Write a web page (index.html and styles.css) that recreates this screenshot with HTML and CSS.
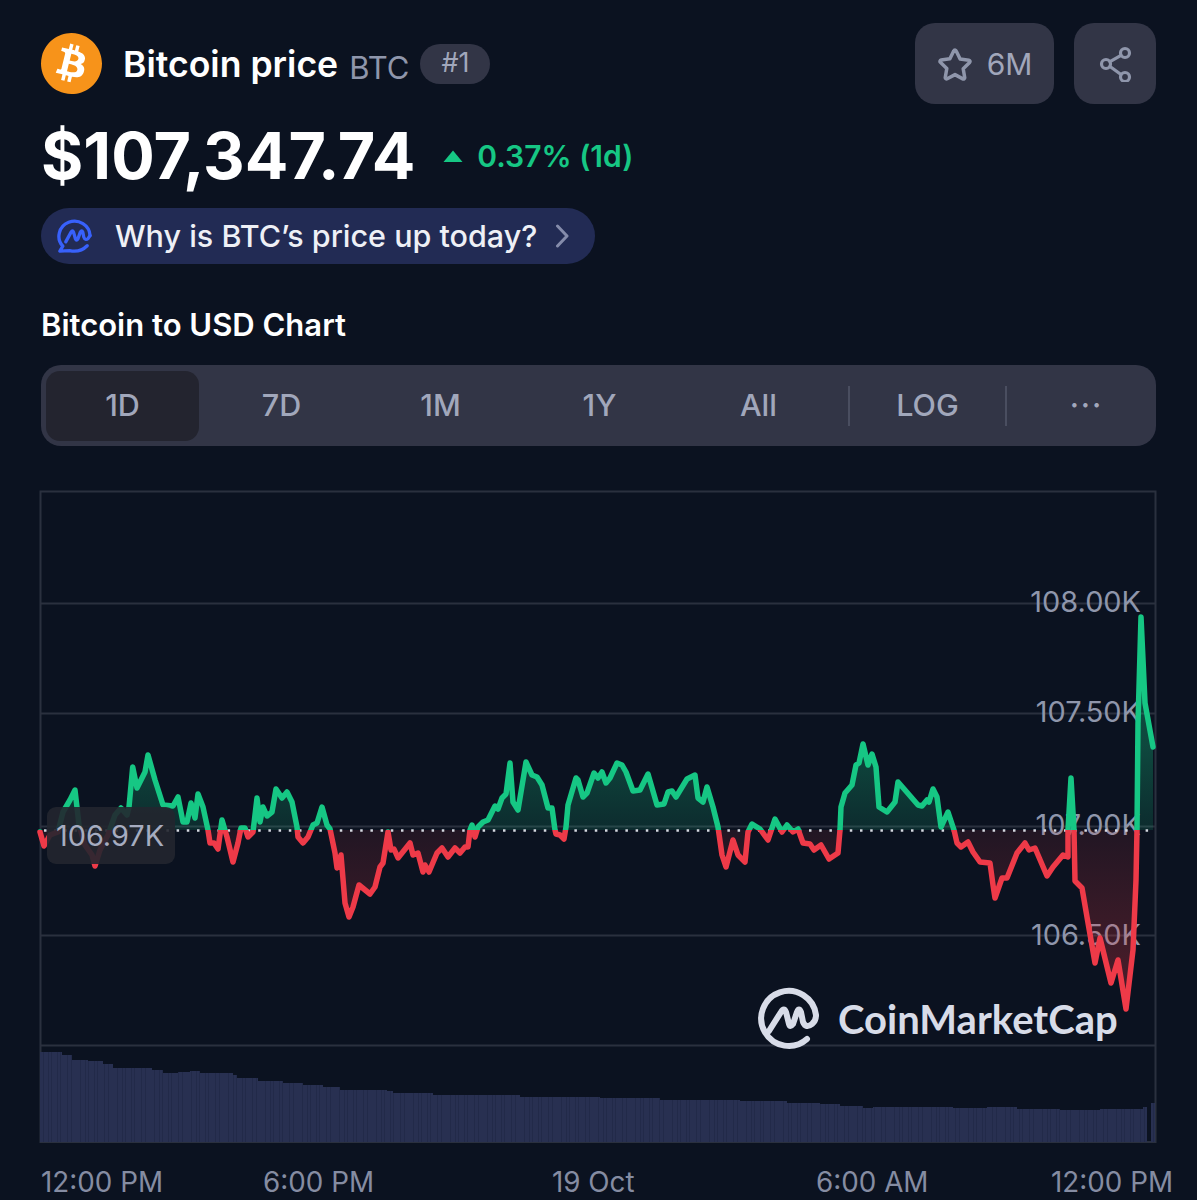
FILE: index.html
```html
<!DOCTYPE html>
<html lang="en">
<head>
<meta charset="utf-8">
<title>Bitcoin price</title>
<link rel="stylesheet" href="styles.css">
</head>
<body>
<main class="page">
  <header class="head">
    <svg class="coin" viewBox="0 0 24 24" aria-hidden="true">
      <circle cx="12" cy="12" r="9" fill="#fff"/>
      <path fill="#f7931a" d="M23.638 14.904c-1.602 6.43-8.113 10.34-14.542 8.736C2.67 22.05-1.244 15.525.362 9.105 1.962 2.67 8.475-1.243 14.9.358c6.43 1.605 10.342 8.115 8.738 14.548v-.002zm-6.35-4.613c.24-1.59-.974-2.45-2.64-3.03l.54-2.153-1.315-.33-.525 2.107c-.345-.087-.705-.167-1.064-.25l.526-2.127-1.32-.33-.54 2.165c-.285-.067-.565-.132-.84-.2l-1.815-.45-.35 1.407s.975.225.955.236c.535.136.63.486.615.766l-1.477 5.92c-.075.166-.24.406-.614.314.015.02-.96-.24-.96-.24l-.66 1.51 1.71.426.93.242-.54 2.19 1.32.327.54-2.17c.36.1.705.19 1.05.273l-.51 2.154 1.32.33.545-2.19c2.24.427 3.93.257 4.64-1.774.57-1.637-.03-2.58-1.217-3.196.854-.193 1.5-.76 1.68-1.93h.01zm-3.01 4.22c-.404 1.64-3.157.75-4.05.53l.72-2.9c.896.23 3.757.67 3.33 2.37zm.41-4.24c-.37 1.49-2.662.735-3.405.55l.654-2.64c.744.18 3.137.524 2.75 2.084v.006z"/>
    </svg>
    <h1 class="name">Bitcoin price</h1>
    <span class="symbol">BTC</span>
    <span class="rank">#1</span>
    <div class="actions">
      <button class="btn btn-watch">
        <svg class="star" viewBox="0 0 36 34" aria-hidden="true"><path d="M18 3.2c.5 0 1 .3 1.2.8l3.9 8 8.8 1.2c1.1.2 1.5 1.5.7 2.3l-6.4 6.2 1.5 8.8c.2 1.1-1 1.9-1.9 1.4L18 27.6l-7.8 4.1c-1 .5-2.1-.3-1.9-1.4l1.5-8.8-6.4-6.2c-.8-.8-.4-2.1.7-2.3l8.8-1.2 3.9-8c.2-.5.7-.8 1.2-.8z"/></svg>
        <span>6M</span>
      </button>
      <button class="btn btn-share">
        <svg class="share" viewBox="0 0 34 36" aria-hidden="true"><circle cx="27" cy="7" r="4.5"/><circle cx="8" cy="18" r="4.5"/><circle cx="27" cy="31" r="4.5"/><path d="M12 15.7 23 9.3M12 20.5l11 8"/></svg>
      </button>
    </div>
  </header>

  <div class="price-row">
    <div class="price">$107,347.74</div>
    <svg class="up" viewBox="0 0 20 12" aria-hidden="true"><path d="M10 .5 19.5 12H.5z"/></svg>
    <div class="change">0.37% (1d)</div>
  </div>

  <a class="why">
    <svg class="why-icon" viewBox="0 0 38 36" aria-hidden="true">
      <path class="why-ring" d="M35 17.500A16 15.500 0 1 0 7 28.500L4 33.500 14 33C23 35 29 31 32 28"/>
      <path class="why-m" d="M10 24 15.500 14Q17 11.500 18 14L20 21Q21 23.500 22.500 21L25 14Q26.500 11.500 27.500 14L28.500 19Q30 23 33 20.500L35 17.500"/>
    </svg>
    <span class="why-text">Why is BTC’s price up today?</span>
    <svg class="chev" viewBox="0 0 14 24" aria-hidden="true"><path d="M2.500 2 12 12 2.500 22"/></svg>
  </a>

  <h2 class="sub">Bitcoin to USD Chart</h2>

  <nav class="tabs">
    <span class="tab tab-on"><b>1D</b></span>
    <span class="tab"><b>7D</b></span>
    <span class="tab"><b>1M</b></span>
    <span class="tab"><b>1Y</b></span>
    <span class="tab"><b>All</b></span>
    <span class="tab tab-log"><b>LOG</b></span>
    <span class="tab tab-more"><b>···</b></span>
  </nav>

  <svg class="chart" viewBox="40 480 1157 720" aria-label="Bitcoin price chart">
    <defs>
      <clipPath id="above"><rect x="30" y="480" width="1160" height="350"/></clipPath>
      <clipPath id="below"><rect x="30" y="830" width="1160" height="320"/></clipPath>
      <linearGradient id="gfill" gradientUnits="userSpaceOnUse" x1="0" y1="745" x2="0" y2="830">
        <stop offset="0" stop-color="#16c784" stop-opacity=".3"/>
        <stop offset="1" stop-color="#16c784" stop-opacity=".14"/>
      </linearGradient>
      <linearGradient id="rfill" gradientUnits="userSpaceOnUse" x1="0" y1="830" x2="0" y2="1000">
        <stop offset="0" stop-color="#ea3943" stop-opacity=".1"/>
        <stop offset="1" stop-color="#ea3943" stop-opacity=".3"/>
      </linearGradient>
      <pattern id="stripes" patternUnits="userSpaceOnUse" x="40" y="0" width="37" height="10">
        <rect x="3" width="1" height="10"/>
        <rect x="8" width="1" height="10"/>
        <rect x="11" width="1" height="10"/>
        <rect x="17" width="1" height="10"/>
        <rect x="20" width="1" height="10"/>
        <rect x="27" width="1" height="10"/>
        <rect x="31" width="1" height="10"/>
      </pattern>
      <path id="area" d="M40 830 40 832 44 846 50 835 58 832 63 812 70 800 75 790 79 825 85 845 92 855 95 866 100 850 108 835 115 815 121 808 127 815 129 807 132.700 767 137 788 145 772 148 755 155 780 163 805 173 806 178 797 183 822 187 822 191 803 195 818 198 794 203 807 208 830 210 843 214 843 218 849 222 820 227 837 233 862 238 843 241 828 245 828 248 837 253 832 257 798 260 822 263 807 267 816 272 812 276 789 282 798 287 792 292 802 297 827 298 837 303 843 308 837 313 825 317 823 322 807 327 825 330 829 335 853 337 868 341 855 345 903 349 917 353 907 359 885 370 894 375 887 380 867 383 863 388 832 391 850 394 849 398 858 410 843 413 855 418 853 423 872 425 865 429 872 437 853 442 848 448 857 455 848 460 853 465 847 468 847 470 830 472 825 475 837 478 827 483 822 488 820 495 806 498 809 502 798 506 794 510 763 513 802 518 810 526 762 532 775 537 777 542 785 548 808 552 808 555 830 556 834 560 835 564 839 566 827 568 805 576 778 578 780 583 797 587 793 594 773 598 778 602 772 606 783 610 778 617 763 622 765 626 772 633 791 640 790 648 774 657 805 664 804 668 792 672 791 676 797 687 779 695 775 698 798 703 802 707 787 713 807 718 827 722 855 726 867 733 840 738 855 745 862 748 832 752 824 760 829 768 840 775 819 782 832 787 825 793 832 798 829 803 843 810 844 814 850 821 845 829 859 838 853 840 830 841 807 845 793 852 785 856 765 859 763 863 744 868 765 872 754 876 767 879 807 887 812 895 802 898 782 905 790 918 805 922 806 927 800 929 802 933 789 937 797 941 827 948 812 954 830 957 843 961 847 968 842 973 852 980 862 990 863 993 885 995 898 1002 878 1007 878 1017 853 1025 843 1029 850 1035 848 1047 876 1053 867 1063 855 1068 857 1068 830 1071 778 1074 830 1075 881 1082 888 1087 917 1095 963 1100 938 1111 983 1118 960 1126 1009 1133 950 1136 880 1137 830 1138 723 1141 617 1145 703 1153 747 1153 830Z"/>
      <path id="line" d="M40 832 44 846 50 835 58 832 63 812 70 800 75 790 79 825 85 845 92 855 95 866 100 850 108 835 115 815 121 808 127 815 129 807 132.700 767 137 788 145 772 148 755 155 780 163 805 173 806 178 797 183 822 187 822 191 803 195 818 198 794 203 807 208 830 210 843 214 843 218 849 222 820 227 837 233 862 238 843 241 828 245 828 248 837 253 832 257 798 260 822 263 807 267 816 272 812 276 789 282 798 287 792 292 802 297 827 298 837 303 843 308 837 313 825 317 823 322 807 327 825 330 829 335 853 337 868 341 855 345 903 349 917 353 907 359 885 370 894 375 887 380 867 383 863 388 832 391 850 394 849 398 858 410 843 413 855 418 853 423 872 425 865 429 872 437 853 442 848 448 857 455 848 460 853 465 847 468 847 470 830 472 825 475 837 478 827 483 822 488 820 495 806 498 809 502 798 506 794 510 763 513 802 518 810 526 762 532 775 537 777 542 785 548 808 552 808 555 830 556 834 560 835 564 839 566 827 568 805 576 778 578 780 583 797 587 793 594 773 598 778 602 772 606 783 610 778 617 763 622 765 626 772 633 791 640 790 648 774 657 805 664 804 668 792 672 791 676 797 687 779 695 775 698 798 703 802 707 787 713 807 718 827 722 855 726 867 733 840 738 855 745 862 748 832 752 824 760 829 768 840 775 819 782 832 787 825 793 832 798 829 803 843 810 844 814 850 821 845 829 859 838 853 840 830 841 807 845 793 852 785 856 765 859 763 863 744 868 765 872 754 876 767 879 807 887 812 895 802 898 782 905 790 918 805 922 806 927 800 929 802 933 789 937 797 941 827 948 812 954 830 957 843 961 847 968 842 973 852 980 862 990 863 993 885 995 898 1002 878 1007 878 1017 853 1025 843 1029 850 1035 848 1047 876 1053 867 1063 855 1068 857 1068 830 1071 778 1074 830 1075 881 1082 888 1087 917 1095 963 1100 938 1111 983 1118 960 1126 1009 1133 950 1136 880 1137 830 1138 723 1141 617 1145 703 1153 747"/>
      <path id="vol" d="M40 1142V1052H62V1055H72V1060H88V1061H103V1064H113V1068H152V1070H163V1073H178V1072H190V1071H200V1073H233V1075H237V1078H258V1081H283V1083H303V1085H323V1087H340V1090H387V1091H393V1093H433V1095H520V1097H600V1098H660V1100H740V1101H787V1103H820V1104H840V1106H863V1108H873V1107H953V1108H987V1107H1017V1109H1060V1110H1100V1109H1143V1107H1147V1142H1151V1103H1155V1142Z"/>
    </defs>

    <g class="grid">
      <path d="M40.500 491.500H1155.500V1142H40.500Z"/>
      <path d="M40 603.500H1155M40 713.500H1155M40 826.500H1155M40 935.500H1155M40 1045.500H1155"/>
    </g>

    <use href="#vol" class="vol"/>
    <use href="#vol" class="vol-stripes"/>

    <text class="ylab" x="1141" y="612">108.00K</text>
    <text class="ylab" x="1141" y="722">107.50K</text>
    <text class="ylab" x="1141" y="835">107.00K</text>
    <text class="ylab" x="1141" y="945">106.50K</text>

    <use href="#area" fill="url(#gfill)" clip-path="url(#above)"/>
    <use href="#area" fill="url(#rfill)" clip-path="url(#below)"/>
    <path class="dots" d="M44 830.500H1155"/>
    <use href="#line" class="ln ln-up" clip-path="url(#above)"/>
    <use href="#line" class="ln ln-down" clip-path="url(#below)"/>

    <rect class="tip" x="47" y="807" width="128" height="57" rx="9"/>
    <text class="tip-text" x="110" y="846">106.97K</text>

    <g class="wm-icon">
      <path d="M769 1031 781 1012Q784 1007 786 1012L789 1024Q790 1028 793 1024L797 1012Q799 1007 801 1012L803 1022Q806 1029 812 1024 816 1021 816 1015A27.500 27.500 0 1 0 807 1039"/>
    </g>
    <text class="wm-text" x="838" y="1034">CoinMarketCap</text>

    <text class="xlab" x="41" y="1192">12:00 PM</text>
    <text class="xlab" x="263" y="1192">6:00 PM</text>
    <text class="xlab" x="552" y="1192">19 Oct</text>
    <text class="xlab" x="816" y="1192">6:00 AM</text>
    <text class="xlab" x="1051" y="1192">12:00 PM</text>
  </svg>
</main>
</body>
</html>
```
FILE: styles.css
```css
* { box-sizing: border-box; }
html, body { margin: 0; height: 1200px; overflow: hidden; }
body {
  background: #0b1220;
  color: #fff;
  font-family: Inter, "Liberation Sans", sans-serif;
}
.page { padding: 23px 41px 0; }

.head { display: flex; align-items: center; height: 81px; }
.coin { width: 61px; height: 61px; flex: none; }
.name { margin: 2px 0 0 21px; font-size: 35.6px; font-weight: 600; line-height: 40px; white-space: nowrap; }
.symbol { margin: 8px 0 0 11px; font-size: 31px; font-weight: 400; color: #8f96ab; line-height: 36px; }
.rank {
  margin-left: 11px; width: 70px; height: 40px; border-radius: 20px;
  background: #323546; color: #a1a7bb; font-size: 27px; line-height: 38px; text-align: center;
}
.actions { margin-left: auto; display: flex; gap: 20px; }
.btn {
  height: 81px; border: 0; border-radius: 20px; background: #323546; color: #a1a7bb;
  font: 400 30px Inter, "Liberation Sans", sans-serif;
  display: flex; align-items: center; justify-content: center; padding: 0;
}
.btn-watch { width: 139px; gap: 14px; }
.btn-share { width: 82px; }
.star { width: 36px; height: 34px; fill: none; stroke: #8f96ab; stroke-width: 3.5; stroke-linejoin: round; }
.share { width: 34px; height: 36px; fill: none; stroke: #8f96ab; stroke-width: 3.2; stroke-linecap: round; }

.price-row { display: flex; align-items: center; height: 64px; margin-top: 20px; }
.price { font-size: 64.6px; font-weight: 700; line-height: 64px; white-space: nowrap; }
.up { width: 20px; height: 12px; margin: 0 14px 0 28px; fill: #16c784; }
.change { font-size: 30px; font-weight: 600; color: #16c784; line-height: 40px; white-space: nowrap; }

.why {
  display: flex; align-items: center; width: 554px; height: 56px; margin-top: 20px;
  border-radius: 28px; background: #222b54; padding-left: 15px;
}
.why-icon { width: 37px; height: 36px; flex: none; fill: none; stroke: #3861fb; stroke-width: 3.4; stroke-linecap: round; stroke-linejoin: round; }
.why-text { margin-left: 22px; font-size: 30.5px; font-weight: 500; color: #eef0f6; line-height: 40px; white-space: nowrap; }
.chev { width: 14px; height: 24px; margin-left: 18px; fill: none; stroke: #858cab; stroke-width: 3; stroke-linecap: round; stroke-linejoin: round; }

.sub { margin: 43px 0 0; font-size: 31px; font-weight: 600; line-height: 36px; white-space: nowrap; }

.tabs {
  display: flex; align-items: center; height: 81px; margin-top: 22px; padding-left: 2px;
  border-radius: 20px; background: #323546; color: #a1a7bb;
}
.tab { flex: none; width: 159px; height: 70px; display: flex; align-items: center; justify-content: center; font-size: 30.5px; }
.tab b { font-weight: 500; margin-top: -2px; }
.tab-on { width: 153px; margin: 0 3px; border-radius: 14px; background: #23242f; }
.tab-log { margin-left: 10px; height: 40px; border-left: 2px solid #4a4e60; border-right: 2px solid #4a4e60; }
.tab-more { width: 149px; padding-left: 10px; letter-spacing: 2px; }

.chart { display: block; width: 1157px; height: 720px; margin: 34px 0 0 -1px; overflow: visible; }
.grid path { fill: none; stroke: #2a303e; stroke-width: 2; }
.vol { fill: #283051; }
.vol-stripes { fill: url(#stripes); }
#stripes rect { fill: #222a49; }
.ylab, .tip-text {
  font-family: Inter, "Liberation Sans", sans-serif; font-size: 28.9px; fill: #8f96ab; text-anchor: end;
}
.tip { fill: #22262f; fill-opacity: .9; }
.tip-text { fill: #a6acc0; text-anchor: middle; }
.dots { fill: none; stroke: #d5d8e0; stroke-width: 2.5; stroke-dasharray: 2.5 7.7; }
.ln { fill: none; stroke-width: 5.5; stroke-linejoin: round; stroke-linecap: round; }
.ln-up { stroke: #16c784; }
.ln-down { stroke: #ee3a48; }
.wm-icon path { fill: none; stroke: #d8dce8; stroke-width: 6; stroke-linecap: round; stroke-linejoin: round; }
.wm-text { font-family: Lato, Inter, sans-serif; font-size: 40px; font-weight: 700; fill: #d8dce8; }
.xlab { font-family: Inter, "Liberation Sans", sans-serif; font-size: 27.8px; fill: #858ca2; }
```
